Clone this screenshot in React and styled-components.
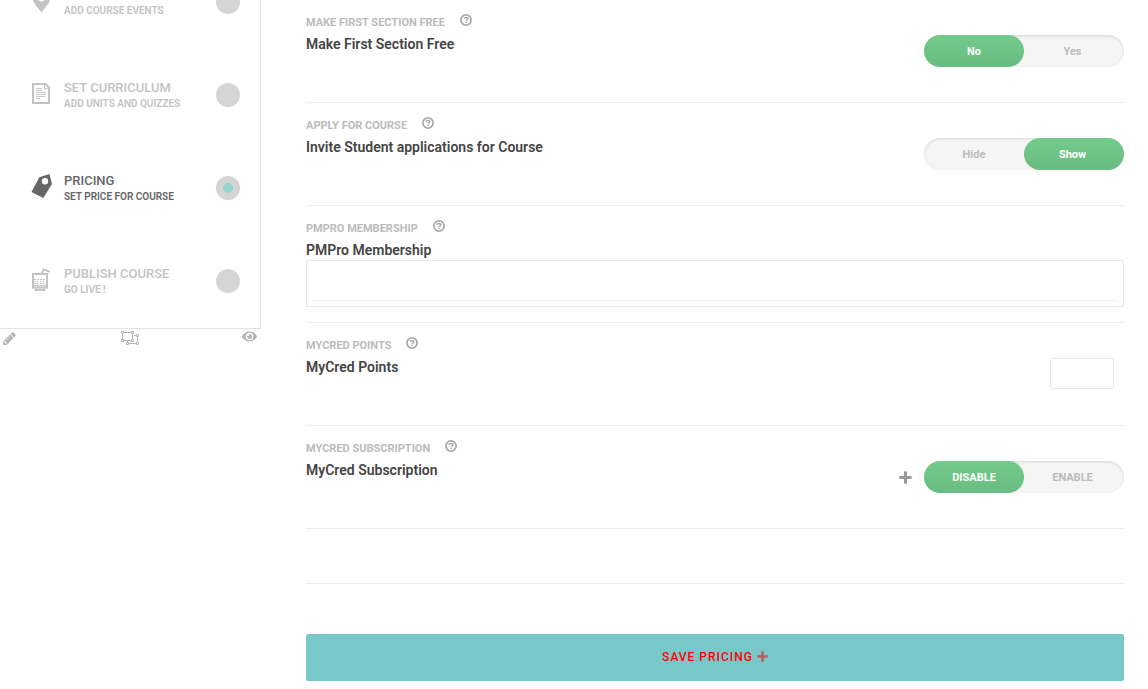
import React from 'react';
import styled, { createGlobalStyle, css } from 'styled-components';
import { FaEye } from 'react-icons/fa';

const GlobalStyle = createGlobalStyle`
  * { box-sizing: border-box; }
  body {
    margin: 0;
    background: #fff;
    font-family: Roboto, "Liberation Sans", sans-serif;
    overflow: hidden;
  }
`;

const Page = styled.div`
  display: flex;
  align-items: flex-start;
  gap: 45px;
  padding-right: 24px;
`;

const Sidebar = styled.aside`
  flex: 0 0 261px;
`;

const Steps = styled.ul`
  list-style: none;
  margin: -44px 0 0;
  padding: 0;
  border: solid #e3e3e3;
  border-width: 0 1px 1px 0;
`;

const Step = styled.li`
  display: flex;
  align-items: center;
  height: 93px;
  padding: 0 20px 1px 31px;
  color: ${(p) => (p.$active ? '#666' : '#c3c3c3')};
`;

const StepIcon = styled.svg`
  flex: none;
  width: 21px;
  height: 25px;
  margin-bottom: 3px;
`;

const StepLink = styled.a`
  flex: 1;
  padding: 1px 0 0 12px;
  color: inherit;
  text-decoration: none;
`;

const StepTitle = styled.strong`
  display: block;
  height: 16px;
  font-size: 13px;
  line-height: 16px;
  font-weight: 500;
`;

const StepNote = styled.span`
  display: block;
  font-size: 10px;
  line-height: 16px;
  font-weight: 600;
`;

const Dot = styled.span`
  flex: none;
  display: grid;
  place-items: center;
  width: 24px;
  height: 24px;
  border-radius: 50%;
  background: #d5d5d5;

  &::after {
    content: '';
    width: 10px;
    height: 10px;
    border-radius: 50%;
    background: ${(p) => (p.$active ? '#93d4d3' : 'transparent')};
  }
`;

const Tools = styled.div`
  display: flex;
  justify-content: space-between;
  align-items: center;
  height: 18px;
  padding: 0 4px 0 2px;
`;

const ToolButton = styled.button`
  display: flex;
  align-self: ${(p) => (p.$top ? 'flex-start' : 'center')};
  padding: 0;
  border: 0;
  background: none;
  color: #b5b5b5;
`;

const Main = styled.main`
  flex: 1;
  min-width: 0;
`;

const Row = styled.section`
  display: flex;
  flex-wrap: wrap;
  align-items: flex-start;
  justify-content: space-between;
  min-height: ${(p) => (p.$short ? 55 : 103)}px;
  padding: 14px 0 15px;
  border-bottom: 1px solid #ededed;
`;

const RowLabel = styled.div`
  display: flex;
  align-items: flex-start;
  gap: 15px;
  height: 18px;
  margin-bottom: 2px;
  color: #bbb;
  font-size: 11px;
  line-height: 18px;
  font-weight: 700;
  text-transform: uppercase;
`;

const RowTitle = styled.h2`
  margin: 0;
  color: #444;
  font-size: 14px;
  line-height: 20px;
  font-weight: 600;
`;

const HelpButton = styled.button`
  display: flex;
  padding: 0;
  border: 0;
  background: none;
  color: #aaa;
`;

const Controls = styled.div`
  display: flex;
  align-items: center;
  gap: 12px;
  margin-top: 21px;
`;

const PlusButton = styled.button`
  display: flex;
  padding: 0;
  border: 0;
  background: none;
  color: #999;
`;

const Toggle = styled.div`
  display: flex;
  width: 200px;
  height: 32px;
  border-radius: 16px;
  background: #f5f5f5;
  box-shadow: inset 0 1px 3px rgba(0, 0, 0, 0.13);
`;

const Option = styled.label`
  flex: 0 0 50%;
  display: grid;
  place-items: center;
  padding: 2px 3px 0 0;
  border-radius: 16px;
  color: #bbb;
  font-size: 11px;
  line-height: 16px;
  font-weight: 700;

  & > * {
    grid-area: 1 / 1;
  }

  &:first-child {
    padding-right: 0;
  }

  &:has(:checked) {
    background: linear-gradient(#73cb8b, #6abc82);
    color: #fff;
  }
`;

const Radio = styled.input`
  appearance: none;
  width: 100%;
  height: 100%;
  margin: 0;
`;

const fieldBorder = css`
  border: 1px solid #e8e8e8;
`;

const SelectBox = styled.div`
  flex: 0 0 100%;
  height: 47px;
  padding: 5px;
  ${fieldBorder}
`;

const SearchInput = styled.input`
  display: block;
  width: 100%;
  height: 35px;
  padding: 0 4px;
  border: 0;
  border-bottom: 1px solid #ededed;
  font: inherit;
  outline: 0;
`;

const PointsInput = styled.input`
  width: 64px;
  height: 31px;
  margin: 21px 10px 0 0;
  padding: 0 8px;
  border-radius: 2px;
  font: inherit;
  ${fieldBorder}
`;

const SaveButton = styled.button`
  display: flex;
  align-items: center;
  justify-content: center;
  gap: 4px;
  width: 100%;
  height: 47px;
  margin-top: 50px;
  padding: 0 0 2px;
  border: 0;
  border-radius: 2px;
  background: #79c8c9;
  color: #f00;
  font-family: inherit;
  font-size: 12px;
  font-weight: 500;
  letter-spacing: 1px;
`;

const PlusMark = ({ size = 13, color = 'currentColor' }) => (
  <svg width={size} height={size} viewBox="0 0 13 13" fill={color} aria-hidden="true">
    <path d="M5.600.3h1.800q.6 0 .6.600V5h4.100q.6 0 .6.600v1.800q0 .6-.6.600H8v4.100q0 .6-.6.600H5.600q-.6 0-.6-.6V8H.9q-.6 0-.6-.6V5.600q0-.6.6-.6H5V.9q0-.6.600-.6z" />
  </svg>
);

const HelpMark = () => (
  <svg width="12" height="12" viewBox="0 0 12 12" fill="none" stroke="currentColor" aria-hidden="true">
    <circle cx="6" cy="6" r="5.100" strokeWidth="1.800" />
    <path d="M4 4.700C4.200 3.900 5 3.600 6 3.600c1.100 0 1.900.4 1.900 1.200 0 1-1.700 1-1.700 2" strokeWidth="1.500" />
    <path d="M6.200 7.500v1.500" strokeWidth="1.500" />
  </svg>
);

const PencilMark = () => (
  <svg width="15" height="15" viewBox="0 0 1792 1792" fill="currentColor" aria-hidden="true">
    <path d="M491 1536l91-91-235-235-91 91v107h128v128h107zM1014 608q0-22-22-22-10 0-17 7l-542 542q-7 7-7 17 0 22 22 22 10 0 17-7l542-542q7-7 7-17zM960 416l416 416-832 832h-416v-416zM1643 512q0 53-37 90l-166 166-416-416 166-165q36-38 90-38 53 0 91 38l235 234q37 39 37 91z" />
  </svg>
);

const UngroupMark = () => (
  <svg width="18" height="14" viewBox="0 0 18 14" fill="none" stroke="currentColor" aria-hidden="true">
    <path d="M3 1.500h7M3 9.500h7M1.500 3v5M11.500 3v5M13 4.500h2M16.500 6v5M8 12.500h7M6.500 10v1" />
    <path d="M.5.5h2v2h-2zM10.500.5h2v2h-2zM.5 8.500h2v2h-2zM10.500 8.500h2v2h-2zM15.500 3.500h2v2h-2zM15.500 11.500h2v2h-2zM5.500 11.500h2v2h-2z" />
  </svg>
);

const icons = {
  pin: (
    <path fillRule="evenodd" fill="currentColor" d="M10.500 0C5.500 0 1.500 4 1.500 9c0 5.500 4.500 9.500 9 15.500 4.500-6 9-10 9-15.500 0-5-4-9-9-9zm0 5a4.200 4.200 0 1 1 0 8.400 4.200 4.200 0 0 1 0-8.400z" />
  ),
  page: (
    <g fill="none" stroke="currentColor">
      <path d="M2 3h12.500l3.500 3.500V22H2z" strokeWidth="2" />
      <path d="M13.500 3v4.500H18" />
      <path d="M5 7.500h6M5 9.500h6M5 11.500h10M5 13.500h10M5 15.500h9M5 17.500h4" strokeWidth=".9" />
    </g>
  ),
  tag: (
    <path fillRule="evenodd" fill="currentColor" d="M8.300 3.300 18.500 0 21 10 12.300 24 .5 18zM14 4a3.200 3.200 0 1 0 0 6.400A3.200 3.200 0 0 0 14 4z" />
  ),
  drink: (
    <g fill="none" stroke="currentColor">
      <path d="M2 7h14v13.500H2z" strokeWidth="2" />
      <path d="M4.500 20.500V23h9v-2.500M10.500 7l2.300-4.700 6 2.500" strokeWidth="1.800" />
      <path d="M3 12.500h12M3 16.500h12" strokeDasharray="2 1" />
      <path d="M3 14.500h12" strokeDasharray="1 2" />
      <path d="M3 18.500h12" />
    </g>
  ),
};

const steps = [
  { icon: 'pin', title: '', note: 'ADD COURSE EVENTS' },
  { icon: 'page', title: 'SET CURRICULUM', note: 'ADD UNITS AND QUIZZES' },
  { icon: 'tag', title: 'PRICING', note: 'SET PRICE FOR COURSE', active: true },
  { icon: 'drink', title: 'PUBLISH COURSE', note: 'GO LIVE !' },
];

function Switch({ name, label, options, value }) {
  return (
    <Toggle role="radiogroup" aria-label={label}>
      {options.map((o) => (
        <Option key={o}>
          <Radio type="radio" name={name} value={o} defaultChecked={o === value} />
          <span>{o}</span>
        </Option>
      ))}
    </Toggle>
  );
}

function Setting({ label, title, children }) {
  return (
    <Row>
      <div>
        <RowLabel>
          <span>{label}</span>
          <HelpButton type="button" aria-label={`Help: ${title}`}><HelpMark /></HelpButton>
        </RowLabel>
        <RowTitle>{title}</RowTitle>
      </div>
      {children}
    </Row>
  );
}

export default function App() {
  return (
    <>
      <GlobalStyle />
      <Page>
        <Sidebar>
          <Steps>
            {steps.map((s) => (
              <Step key={s.note} $active={s.active}>
                <StepIcon viewBox="0 0 21 25" aria-hidden="true">{icons[s.icon]}</StepIcon>
                <StepLink href="#">
                  <StepTitle>{s.title}</StepTitle>
                  <StepNote>{s.note}</StepNote>
                </StepLink>
                <Dot $active={s.active} />
              </Step>
            ))}
          </Steps>
          <Tools>
            <ToolButton type="button" aria-label="Edit"><PencilMark /></ToolButton>
            <ToolButton type="button" aria-label="Arrange"><UngroupMark /></ToolButton>
            <ToolButton type="button" aria-label="Preview" $top><FaEye size={15} /></ToolButton>
          </Tools>
        </Sidebar>
        <Main>
          <Setting label="Make First Section Free" title="Make First Section Free">
            <Controls>
              <Switch name="free" label="Make First Section Free" options={['No', 'Yes']} value="No" />
            </Controls>
          </Setting>
          <Setting label="Apply for Course" title="Invite Student applications for Course">
            <Controls>
              <Switch name="apply" label="Apply for Course" options={['Hide', 'Show']} value="Show" />
            </Controls>
          </Setting>
          <Setting label="PMPro Membership" title="PMPro Membership">
            <SelectBox>
              <SearchInput type="text" aria-label="PMPro Membership" />
            </SelectBox>
          </Setting>
          <Setting label="MyCred Points" title="MyCred Points">
            <PointsInput type="text" aria-label="MyCred Points" />
          </Setting>
          <Setting label="MyCred Subscription" title="MyCred Subscription">
            <Controls>
              <PlusButton type="button" aria-label="Add"><PlusMark /></PlusButton>
              <Switch name="subscription" label="MyCred Subscription" options={['DISABLE', 'ENABLE']} value="DISABLE" />
            </Controls>
          </Setting>
          <Row $short />
          <SaveButton type="button">
            <span>SAVE PRICING</span>
            <PlusMark size={11} color="#b95a5d" />
          </SaveButton>
        </Main>
      </Page>
    </>
  );
}
